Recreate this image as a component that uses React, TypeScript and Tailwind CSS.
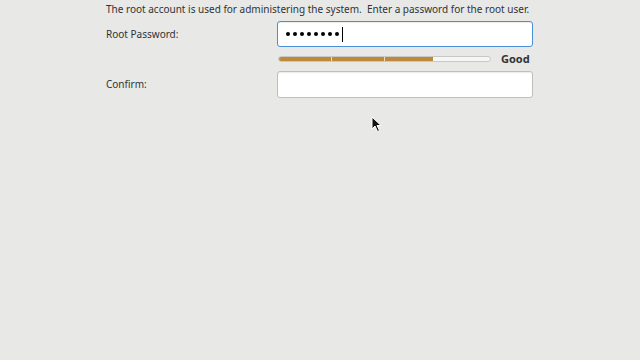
import React from 'react';

const font = { fontFamily: '"Noto Sans", "DejaVu Sans", sans-serif' };

const Field = ({ label, children }: { label: string; children: React.ReactNode }) => (
  <div className="flex items-center">
    <span className="w-[171px] text-[10px] text-[#2e3436]">{label}</span>
    {children}
  </div>
);

export default function App() {
  const strength = 0.73;
  return (
    <div className="relative w-[640px] h-[360px] bg-[#e8e8e7] overflow-hidden" style={font}>
      <div className="pl-[106px] pt-[1px]">
        <p className="text-[10px] leading-[16px] text-[#2e3436] whitespace-pre">
          The root account is used for administering the system.  Enter a password for the root user.
        </p>
        <div className="mt-[4px]">
          <Field label="Root Password:">
            <div className="w-[256px] h-[26px] rounded-[3px] border border-[#4a90d9] bg-white shadow-[inset_0_1px_1px_rgba(0,0,0,0.08)] flex items-center pl-[8px] gap-[3px]">
              {Array.from({ length: 8 }).map((_, i) => (
                <span key={i} className="w-[4px] h-[4px] rounded-full bg-black" />
              ))}
              <span className="w-px h-[15px] bg-black" />
            </div>
          </Field>
        </div>
        <div className="flex items-center h-[6px] mt-[9px] ml-[172px]">
          <div className="relative w-[213px] h-[6px] rounded-full border border-[#c8c8c6] bg-[#f6f6f5] overflow-hidden">
            <div className="absolute left-0 top-0 bottom-0 bg-[#bd8a3a]" style={{ width: `${strength * 100}%` }} />
            <div className="absolute top-0 bottom-0 left-[52px] w-px bg-[#f0e0c0]" />
            <div className="absolute top-0 bottom-0 left-[105px] w-px bg-[#f0e0c0]" />
          </div>
          <span className="ml-[10px] text-[11px] font-bold text-[#2e3436]">Good</span>
        </div>
        <div className="mt-[9px]">
          <Field label="Confirm:">
            <div className="w-[256px] h-[27px] rounded-[3px] border border-[#bfbfbd] bg-white shadow-[inset_0_1px_1px_rgba(0,0,0,0.08)]" />
          </Field>
        </div>
      </div>
      <svg className="absolute left-[371px] top-[116px]" width="12" height="17" viewBox="0 0 12 17">
        <path d="M1 1 L1 13 L4 10 L6.5 15.5 L8.5 14.5 L6 9.5 L10 9.5 Z" fill="#111" stroke="#fff" strokeWidth="1" />
      </svg>
    </div>
  );
}
